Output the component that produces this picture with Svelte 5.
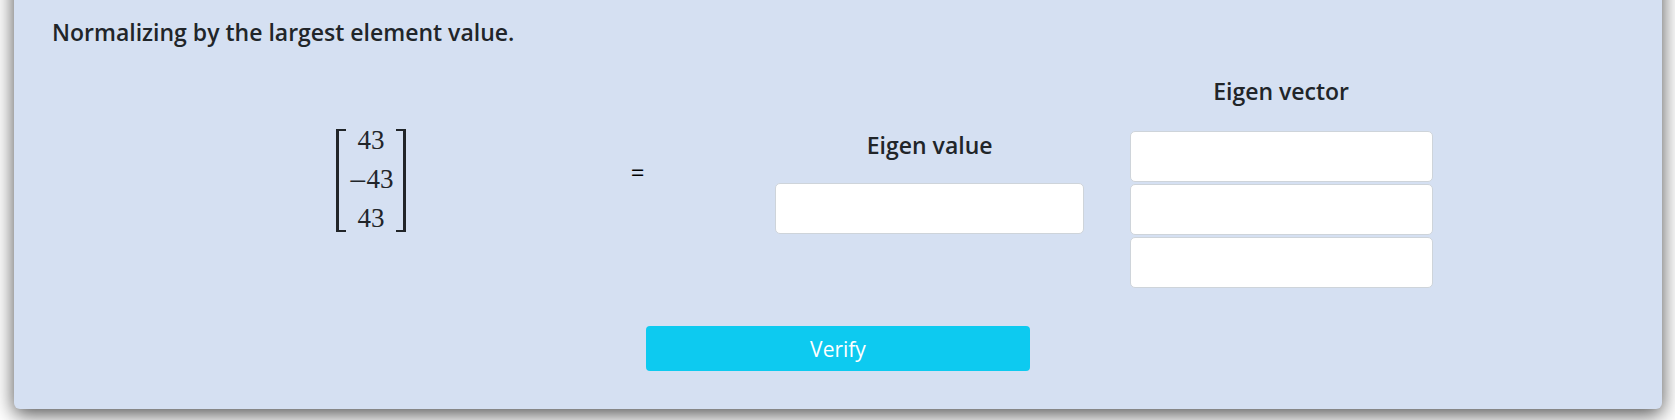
<script>
  const matrix = [43, -43, 43];
  let eigenValue = $state('');
  let eigenVector = $state(['', '', '']);
</script>

<form class="card" onsubmit={(event) => event.preventDefault()}>
  <h2 class="title">Normalizing by the largest element value.</h2>

  <div class="equation">
    <div class="cell">
      <div class="matrix">
        {#each matrix as entry}
          <span class="entry">{#if entry < 0}<span class="minus">−</span>{/if}{Math.abs(entry)}</span>
        {/each}
      </div>
    </div>

    <span class="equals">=</span>

    <div class="field value">
      <label for="eigen-value">Eigen value</label>
      <input id="eigen-value" type="text" bind:value={eigenValue} />
    </div>

    <div class="field vector" role="group" aria-labelledby="vector-label">
      <label id="vector-label" for="vector-0">Eigen vector</label>
      {#each eigenVector as _, i}
        <input id={`vector-${i}`} aria-labelledby="vector-label" type="text" bind:value={eigenVector[i]} />
      {/each}
    </div>
  </div>

  <button type="submit">Verify</button>
</form>

<style>
  :global(body) {
    background: #fff;
  }

  .card {
    box-sizing: border-box;
    display: flex;
    flex-direction: column;
    margin: -30px 13px 11px 14px;
    padding: 46px 0 38px;
    border-radius: 6px;
    background: #d5e0f2;
    box-shadow: 0 5px 20px rgba(0, 0, 0, 0.7);
    color: #212529;
    font-family: 'Segoe UI', 'Open Sans', 'Noto Sans', sans-serif;
  }

  .title {
    margin: 0 38px;
    font-size: 23px;
    font-weight: 600;
    line-height: 32px;
  }

  .equation {
    display: grid;
    grid-template-columns: 296fr 238fr 347fr 357fr;
    align-items: center;
    margin: 27px 12.3% 0 12.7%;
  }

  .cell {
    display: flex;
    justify-content: center;
  }

  .matrix {
    position: relative;
    display: flex;
    flex-direction: column;
    align-items: center;
    box-sizing: border-box;
    min-width: 70px;
    padding: 0 10px 4px;
    font-family: 'Liberation Serif', serif;
    font-size: 27px;
  }

  .matrix::before,
  .matrix::after {
    content: '';
    position: absolute;
    top: 8px;
    bottom: 10px;
    width: 7px;
    border: 2px solid #212529;
  }

  .matrix::before {
    left: 0;
    border-left-width: 3px;
    border-right: 0;
  }

  .matrix::after {
    right: 0;
    border-right-width: 3px;
    border-left: 0;
  }

  .entry {
    line-height: 39px;
    white-space: nowrap;
  }

  .minus {
    font-size: 32px;
    line-height: 0;
    vertical-align: -4px;
  }

  .equals {
    padding-bottom: 20px;
    color: #000;
    font-size: 24px;
    line-height: 32px;
    text-align: center;
  }

  .field {
    display: flex;
    flex-direction: column;
    align-items: center;
    gap: 2px;
  }

  label {
    margin-bottom: 22px;
    font-size: 23px;
    font-weight: 600;
    line-height: 32px;
  }

  .value label {
    margin-bottom: 20px;
  }

  input {
    box-sizing: border-box;
    width: 89%;
    height: 51px;
    padding: 6px 12px;
    border: 1px solid #ced4da;
    border-radius: 5px;
    background: #fff;
    color: #212529;
    font: inherit;
    font-size: 20px;
  }

  .vector input {
    width: 85%;
  }

  button {
    align-self: center;
    width: 384px;
    max-width: 90%;
    height: 45px;
    margin-top: 38px;
    padding: 0;
    border: 0;
    border-radius: 4px;
    background: #0dcaf0;
    color: #fff;
    font-family: inherit;
    font-size: 21px;
    line-height: 30px;
  }
</style>
